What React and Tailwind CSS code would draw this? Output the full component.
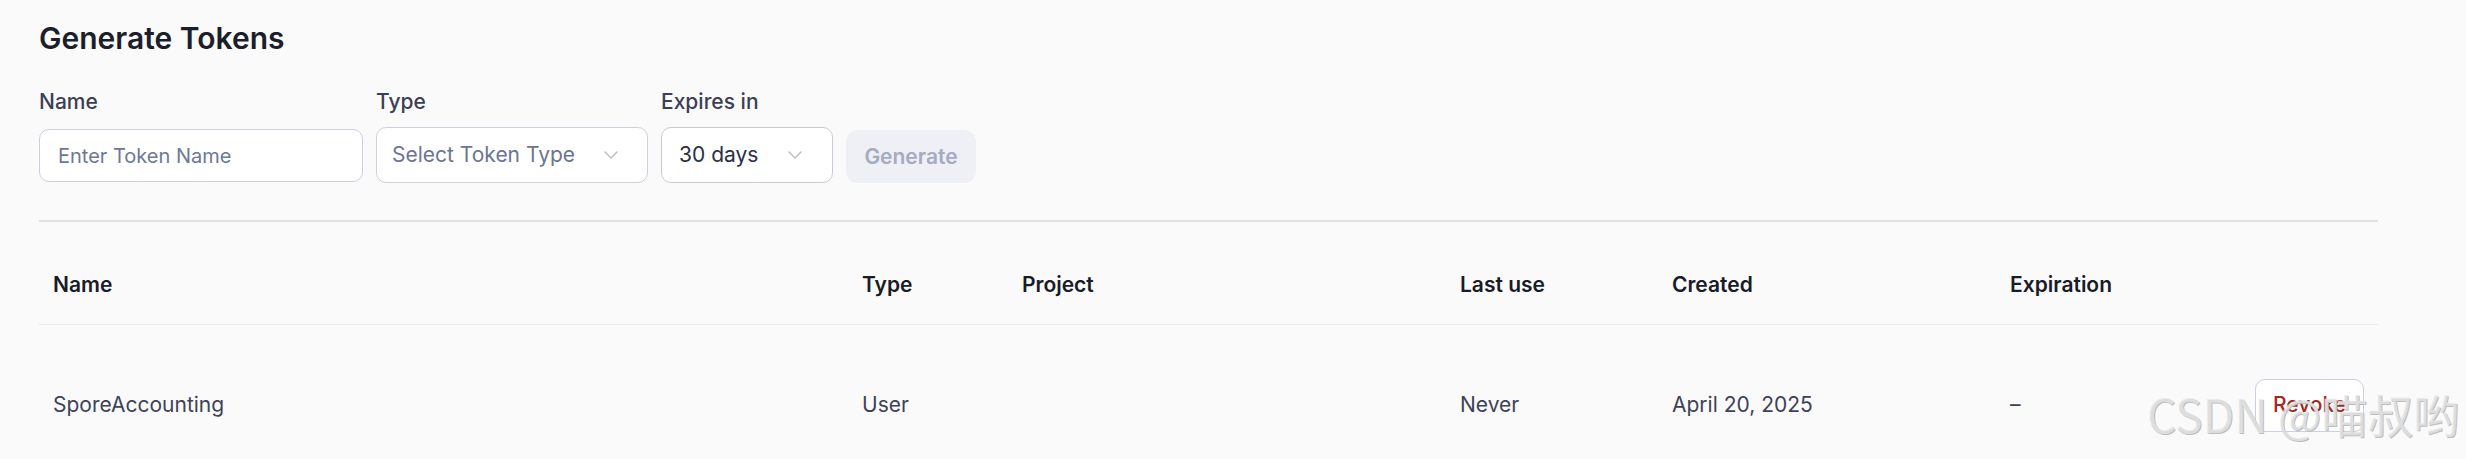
import React from "react";

const Chevron = () => (
  <svg width="14" height="8" viewBox="0 0 14 8" fill="none" className="shrink-0">
    <path d="M1 1l6 6 6-6" stroke="#b7bcc7" strokeWidth="1.4" strokeLinecap="round" strokeLinejoin="round" />
  </svg>
);

const columns = ["Name", "Type", "Project", "Last use", "Created", "Expiration", ""];

const rows = [
  { name: "SporeAccounting", type: "User", project: "", lastUse: "Never", created: "April 20, 2025", expiration: "–" },
];

export default function App() {
  return (
    <div className="relative h-screen bg-[#fafafa] font-['Inter',_sans-serif] overflow-hidden">
      <div className="pl-[39px] pt-[20px] w-[2378px]">
        <h1 className="text-[30px] leading-[36px] font-semibold text-[#1c1e2b]">Generate Tokens</h1>

        {/* form */}
        <div className="mt-[32px] flex items-start gap-[13px]">
          <div className="flex flex-col">
            <label className="text-[21px] leading-[28px] font-medium text-[#3a3f55] mb-[13px]">Name</label>
            <div className="w-[324px] h-[53px] rounded-[10px] border border-[#c7cfe0] bg-white flex items-center px-[18px]">
              <span className="text-[20px] text-[#6c7896]">Enter Token Name</span>
            </div>
          </div>
          <div className="flex flex-col">
            <label className="text-[21px] leading-[28px] font-medium text-[#3a3f55] mb-[11px]">Type</label>
            <div className="w-[272px] h-[56px] rounded-[10px] border border-[#cdd1da] bg-white flex items-center justify-between pl-[15px] pr-[29px]">
              <span className="text-[21px] text-[#6b7591]">Select Token Type</span>
              <Chevron />
            </div>
          </div>
          <div className="flex flex-col">
            <label className="text-[21px] leading-[28px] font-medium text-[#3a3f55] mb-[11px]">Expires in</label>
            <div className="w-[172px] h-[56px] rounded-[10px] border border-[#cbcbcf] bg-white flex items-center justify-between pl-[17px] pr-[30px]">
              <span className="text-[21px] text-[#2a2f45]">30 days</span>
              <Chevron />
            </div>
          </div>
          <button className="mt-[42px] w-[130px] h-[53px] rounded-[12px] bg-[#eff0f5] text-[21px] font-semibold text-[#a5abc0]">
            Generate
          </button>
        </div>

        <div className="mt-[37px] h-[2px] bg-[#e0e0e0]" />

        {/* table */}
        <div className="mt-[23px] grid grid-cols-[809px_160px_438px_212px_338px_245px_137px]">
          {columns.map((c, i) => (
            <div key={i} className="h-[80px] flex items-center px-[14px] border-b border-[#ebebee] text-[21px] font-semibold text-[#191b27]">
              {c}
            </div>
          ))}
          {rows.map((r) => (
            <React.Fragment key={r.name}>
              <div className="h-[160px] flex items-center px-[14px] text-[21px] text-[#3d4257]">{r.name}</div>
              <div className="h-[160px] flex items-center px-[14px] text-[21px] text-[#3d4257]">{r.type}</div>
              <div className="h-[160px] flex items-center px-[14px] text-[21px] text-[#3d4257]">{r.project}</div>
              <div className="h-[160px] flex items-center px-[14px] text-[21px] text-[#3d4257]">{r.lastUse}</div>
              <div className="h-[160px] flex items-center px-[14px] text-[21px] text-[#3d4257]">{r.created}</div>
              <div className="h-[160px] flex items-center px-[14px] text-[21px] text-[#3d4257]">{r.expiration}</div>
              <div className="h-[160px] flex items-center px-[14px]">
                <button className="w-[110px] h-[53px] rounded-[10px] border border-[#c9d0e2] bg-white text-[21px] font-medium text-[#a3291f]">
                  Revoke
                </button>
              </div>
            </React.Fragment>
          ))}
        </div>
      </div>

      {/* watermark */}
      <div className="absolute left-[2147px] top-[390px] text-[46px] leading-[46px] whitespace-nowrap text-[#e6e6e6]/80 font-['Noto_Sans_CJK_SC',_sans-serif] [text-shadow:1px_1px_0_#bdbdbd]">
        CSDN @喵叔哟
      </div>
    </div>
  );
}
